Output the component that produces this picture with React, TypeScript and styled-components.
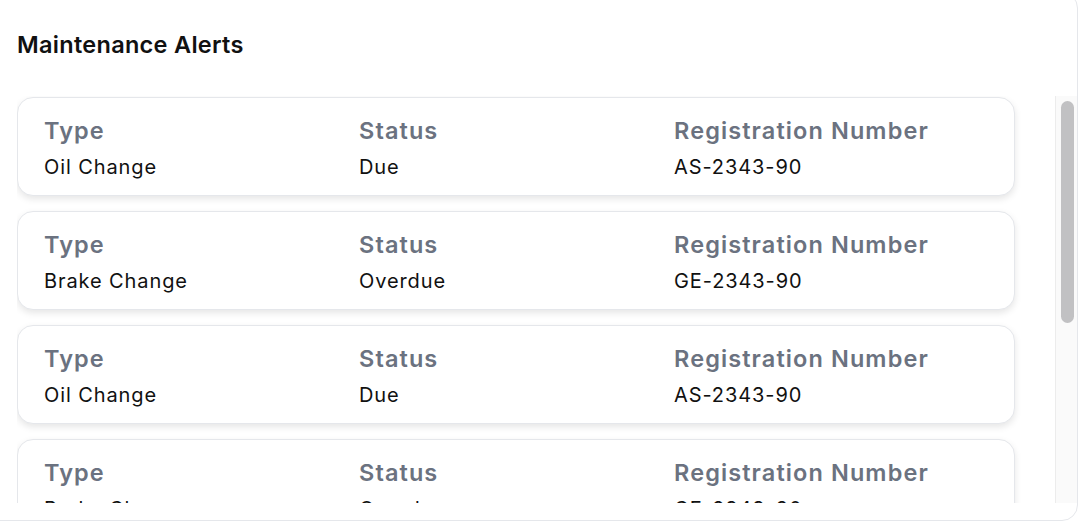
import React from "react";
import styled, { createGlobalStyle } from "styled-components";

const alerts = [
  { type: "Oil Change", status: "Due", reg: "AS-2343-90" },
  { type: "Brake Change", status: "Overdue", reg: "GE-2343-90" },
  { type: "Oil Change", status: "Due", reg: "AS-2343-90" },
  { type: "Brake Change", status: "Overdue", reg: "GE-2343-90" },
  { type: "Oil Change", status: "Due", reg: "AS-2343-90" },
  { type: "Brake Change", status: "Overdue", reg: "GE-2343-90" },
];

const GlobalStyle = createGlobalStyle`
  html, body {
    margin: 0;
    padding: 0;
    background: #ffffff;
    overflow: hidden;
  }
  body {
    font-family: Inter, "Noto Sans", "Liberation Sans", sans-serif;
    -webkit-font-smoothing: antialiased;
  }
`;

const Panel = styled.section`
  box-sizing: border-box;
  width: 1094px;
  height: 529px;
  margin: -8px 0 0 -16px;
  padding: 38px 0 16px 32px;
  background: #ffffff;
  border: 1px solid #e5e7eb;
  border-radius: 16px;
  display: flex;
  flex-direction: column;
`;

const Title = styled.h2`
  margin: 0 0 37px;
  font-size: 23.5px;
  line-height: 28px;
  font-weight: 600;
  letter-spacing: 0.3px;
  color: #111111;
`;

const ScrollArea = styled.div`
  height: 407px;
  display: flex;
`;

const List = styled.div`
  flex: 1;
  overflow: hidden;
  padding: 1px 40px 0 0;
  display: flex;
  flex-direction: column;
  gap: 15px;
`;

const Track = styled.div`
  box-sizing: border-box;
  width: 22px;
  padding: 5px 3px 0 5px;
  background: #fafafa;
  border-left: 1px solid #ececec;
`;

const Thumb = styled.div`
  height: 222px;
  border-radius: 7px;
  background: #c1c1c3;
`;

const Card = styled.div`
  flex: 0 0 auto;
  box-sizing: border-box;
  height: 99px;
  padding: 19px 26px 13px;
  background: #ffffff;
  border: 1px solid #e5e7eb;
  border-radius: 16px;
  box-shadow: 0 3px 7px rgba(0, 0, 0, 0.1);
  display: grid;
  grid-template-columns: repeat(3, 315px);
`;

const Field = styled.div`
  display: flex;
  flex-direction: column;
  gap: 8px;
`;

const Label = styled.div`
  font-size: 23.5px;
  line-height: 28px;
  font-weight: 600;
  letter-spacing: 1.1px;
  color: #6b7280;
  white-space: nowrap;
`;

const Value = styled.div`
  font-size: 20px;
  line-height: 28px;
  font-weight: 400;
  letter-spacing: 0.9px;
  color: #111111;
`;

export default function App() {
  return (
    <>
      <GlobalStyle />
      <Panel>
        <Title>Maintenance Alerts</Title>
        <ScrollArea>
          <List>
            {alerts.map((a, i) => (
              <Card key={i}>
                <Field>
                  <Label>Type</Label>
                  <Value>{a.type}</Value>
                </Field>
                <Field>
                  <Label>Status</Label>
                  <Value>{a.status}</Value>
                </Field>
                <Field>
                  <Label>Registration Number</Label>
                  <Value>{a.reg}</Value>
                </Field>
              </Card>
            ))}
          </List>
          <Track>
            <Thumb />
          </Track>
        </ScrollArea>
      </Panel>
    </>
  );
}
